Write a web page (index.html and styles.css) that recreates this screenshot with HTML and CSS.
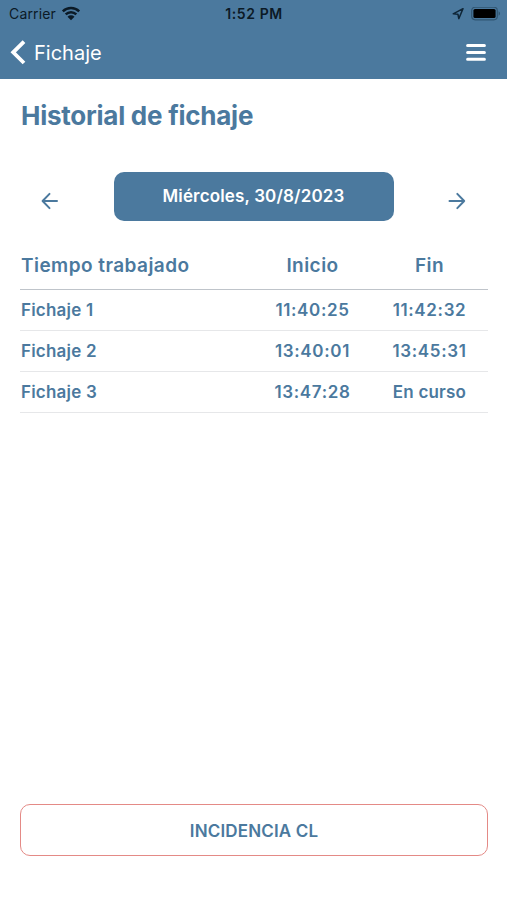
FILE: index.html
```html
<!DOCTYPE html>
<html lang="es">
<head>
  <meta charset="UTF-8">
  <meta name="viewport" content="width=device-width, initial-scale=1.0">
  <title>Historial de fichaje</title>
  <link rel="stylesheet" href="styles.css">
</head>
<body>
  <header>
    <!-- Barra de estado -->
    <div class="status-bar">
      <div class="carrier">
        <span class="carrier-name">Carrier</span>
        <svg class="wifi" width="20" height="16" viewBox="0 0 20 16">
          <path d="M1.8 5.3a11.8 11.8 0 0 1 16.4 0M4.7 8.4a7.6 7.6 0 0 1 10.6 0" fill="none" stroke="#0b1a26" stroke-width="2.5"/>
          <path d="M10 14.3L6.5 10.7a5 5 0 0 1 7 0z" fill="#0b1a26"/>
        </svg>
      </div>
      <span class="clock">1:52 PM</span>
      <div class="indicators">
        <svg width="12" height="12" viewBox="0 0 12 12">
          <path d="M1.2 5.8L11 .7L6.8 10.6L5.9 6.2z" fill="none" stroke="#0f2536" stroke-width="1.5" stroke-linejoin="round"/>
        </svg>
        <svg width="30" height="14" viewBox="0 0 30 14">
          <rect x="0.7" y="0.2" width="25.6" height="12.6" rx="3.5" fill="none" stroke="#315672" stroke-width="1.2"/>
          <rect x="2.4" y="2" width="22.2" height="9" rx="1.6" fill="#000"/>
          <path d="M27.6 4.3v4.4c2-.8 2-3.6 0-4.4z" fill="#315672"/>
        </svg>
      </div>
    </div>

    <!-- Barra de navegación -->
    <nav class="nav-bar">
      <a class="back">
        <svg width="17" height="28" viewBox="0 0 17 28">
          <path d="M14 2.6L3.2 13.3L14 24" fill="none" stroke="#fff" stroke-width="3.8"/>
        </svg>
        <span class="back-text">Fichaje</span>
      </a>
      <svg class="menu" width="20" height="18" viewBox="0 0 20 18">
        <path d="M1.6 1.5h16.8M1.6 8.5h16.8M1.6 15.3h16.8" stroke="#fff" stroke-width="3" stroke-linecap="round"/>
      </svg>
    </nav>
  </header>

  <main>
    <h1>Historial de fichaje</h1>

    <!-- Selector de día -->
    <div class="date-picker">
      <svg class="arrow" width="18" height="18" viewBox="0 0 18 18">
        <path d="M16 9H1.8M8.5 1.9L1.6 9l6.9 7.1"/>
      </svg>
      <button class="date-btn">Miércoles, 30/8/2023</button>
      <svg class="arrow" width="18" height="18" viewBox="0 0 18 18">
        <path d="M1.5 9h14.7M9.3 1.9L16.2 9l-6.9 7.1"/>
      </svg>
    </div>

    <!-- Fichajes -->
    <table class="history">
      <thead>
        <tr><th>Tiempo trabajado</th><th>Inicio</th><th>Fin</th></tr>
      </thead>
      <tbody>
        <tr><td>Fichaje 1</td><td class="time">11:40:25</td><td class="time">11:42:32</td></tr>
        <tr><td>Fichaje 2</td><td class="time">13:40:01</td><td class="time">13:45:31</td></tr>
        <tr><td>Fichaje 3</td><td class="time">13:47:28</td><td>En curso</td></tr>
      </tbody>
    </table>

    <button class="incident-btn">INCIDENCIA CL</button>
  </main>
</body>
</html>
```
FILE: styles.css
```css
* {
  box-sizing: border-box;
}

body {
  font-family: Inter, "Liberation Sans", sans-serif;
  margin: 0;
  background: #fff;
  color: #4b799e;
  display: flex;
  flex-direction: column;
  height: 900px;
}

/* Cabecera */
header {
  background-color: #4b799e;
  height: 79px;
}

.status-bar {
  display: grid;
  grid-template-columns: 1fr auto 1fr;
  align-items: center;
  height: 27px;
  padding: 0 6px 0 9px;
  color: #0b1a26;
  font-size: 14px;
}

.carrier {
  display: flex;
  align-items: center;
  gap: 5px;
}

.carrier-name {
  letter-spacing: 0.15px;
}

.clock {
  font-weight: 600;
  letter-spacing: 0.6px;
  margin-right: 2px;
}

.indicators {
  display: flex;
  align-items: center;
  justify-content: flex-end;
  gap: 7px;
}

.nav-bar {
  display: flex;
  align-items: center;
  justify-content: space-between;
  height: 51px;
  padding: 0 21px 0 10px;
}

.back {
  display: flex;
  align-items: center;
  gap: 7px;
  color: #fff;
  font-size: 20px;
}

/* Contenido */
main {
  flex: 1;
  display: flex;
  flex-direction: column;
  padding: 21px 19px 44px 20px;
}

h1 {
  margin: 0 0 0 1px;
  font-size: 26px;
  line-height: 32px;
  font-weight: 700;
  letter-spacing: -0.25px;
}

.date-picker {
  display: flex;
  align-items: center;
  justify-content: space-between;
  margin-top: 40px;
  padding: 0 22px 0 21px;
}

.arrow {
  margin-top: 9px;
  fill: none;
  stroke: #4b799e;
  stroke-width: 2;
  stroke-linecap: round;
  stroke-linejoin: round;
}

.date-btn {
  width: 280px;
  height: 49px;
  padding: 0 0 1px;
  border: none;
  border-radius: 10px;
  background-color: #4b799e;
  color: #fff;
  font: 600 17px Inter, sans-serif;
  letter-spacing: 0.15px;
}

/* Tabla */
.history {
  width: 100%;
  margin-top: 20px;
  table-layout: fixed;
  border-collapse: separate;
  border-spacing: 0;
}

.history th {
  height: 49px;
  padding: 0;
  border-bottom: 1px solid #bfc4ca;
  font-size: 19px;
  font-weight: 600;
  letter-spacing: 0.45px;
}

.history td {
  height: 41px;
  padding: 0;
  border-bottom: 1px solid #e6e7e9;
  font-size: 17px;
  font-weight: 600;
  letter-spacing: 0.2px;
  text-align: center;
}

.history th:first-child,
.history td:first-child {
  width: 50%;
  padding-left: 1px;
  text-align: left;
}

.history .time {
  letter-spacing: 0.65px;
}

.incident-btn {
  height: 52px;
  margin-top: auto;
  padding-top: 2px;
  border: 1.5px solid #e48a86;
  border-radius: 10px;
  background: #fff;
  color: #4b799e;
  font: 600 17px Inter, sans-serif;
  letter-spacing: 0.15px;
}
```
